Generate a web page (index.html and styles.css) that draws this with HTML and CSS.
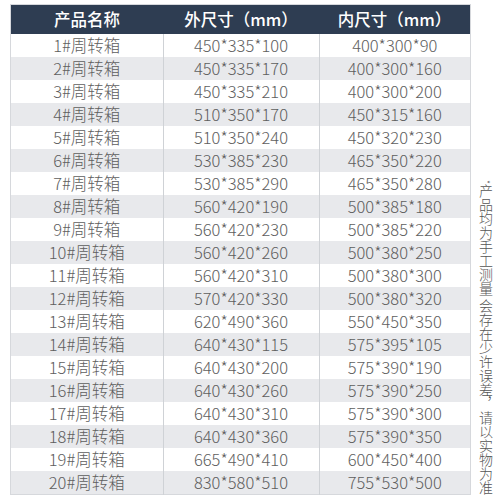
FILE: index.html
```html
<!DOCTYPE html>
<html lang="zh">
<head>
<meta charset="utf-8">
<link rel="stylesheet" href="styles.css">
</head>
<body>
<div class="page">
  <table class="spec">
    <thead>
      <tr><th class="c1">产品名称</th><th class="c2">外尺寸（mm）</th><th class="c3">内尺寸（mm）</th></tr>
    </thead>
    <tbody>
      <tr><td>1#周转箱</td><td>450*335*100</td><td>400*300*90</td></tr>
      <tr><td>2#周转箱</td><td>450*335*170</td><td>400*300*160</td></tr>
      <tr><td>3#周转箱</td><td>450*335*210</td><td>400*300*200</td></tr>
      <tr><td>4#周转箱</td><td>510*350*170</td><td>450*315*160</td></tr>
      <tr><td>5#周转箱</td><td>510*350*240</td><td>450*320*230</td></tr>
      <tr><td>6#周转箱</td><td>530*385*230</td><td>465*350*220</td></tr>
      <tr><td>7#周转箱</td><td>530*385*290</td><td>465*350*280</td></tr>
      <tr><td>8#周转箱</td><td>560*420*190</td><td>500*385*180</td></tr>
      <tr><td>9#周转箱</td><td>560*420*230</td><td>500*385*220</td></tr>
      <tr><td>10#周转箱</td><td>560*420*260</td><td>500*380*250</td></tr>
      <tr><td>11#周转箱</td><td>560*420*310</td><td>500*380*300</td></tr>
      <tr><td>12#周转箱</td><td>570*420*330</td><td>500*380*320</td></tr>
      <tr><td>13#周转箱</td><td>620*490*360</td><td>550*450*350</td></tr>
      <tr><td>14#周转箱</td><td>640*430*115</td><td>575*395*105</td></tr>
      <tr><td>15#周转箱</td><td>640*430*200</td><td>575*390*190</td></tr>
      <tr><td>16#周转箱</td><td>640*430*260</td><td>575*390*250</td></tr>
      <tr><td>17#周转箱</td><td>640*430*310</td><td>575*390*300</td></tr>
      <tr><td>18#周转箱</td><td>640*430*360</td><td>575*390*350</td></tr>
      <tr><td>19#周转箱</td><td>665*490*410</td><td>600*450*400</td></tr>
      <tr><td>20#周转箱</td><td>830*580*510</td><td>755*530*500</td></tr>
    </tbody>
  </table>
  <div class="note"><span class="star">*</span>产品均为手工测量 会存在少许误差，请以实物为准</div>
</div>
</body>
</html>
```
FILE: styles.css
```css
html, body {
  margin: 0;
  padding: 0;
  background: #ffffff;
}
.page {
  display: flex;
  align-items: flex-end;
  width: 500px;
  height: 495px;
  padding: 3px 0 0 10px;
  box-sizing: border-box;
}
.spec {
  flex: none;
  width: 459px;
  border-collapse: collapse;
  table-layout: fixed;
  font-family: "Noto Sans CJK SC", "Noto Sans", sans-serif;
  border: 1px solid #d6d8dc;
}
.spec th {
  background: #2e3d52;
  color: #ffffff;
  font-size: 16.5px;
  font-weight: 500;
  height: 29px;
  padding: 0;
  line-height: 29px;
  text-align: center;
}
.spec .c1 { width: 152px; }
.spec .c2 { width: 156px; }
.spec .c3 { width: 151px; }
.spec td {
  height: 23px;
  padding: 0;
  line-height: 23px;
  text-align: center;
  color: #5e5e5e;
  font-size: 16.5px;
  font-weight: 300;
  border-left: 1px solid #cfd2d6;
}
.spec td:first-child { border-left: none; }
.spec tbody tr:nth-child(even) td { background: #e8e9ec; }
.note {
  flex: none;
  width: 28px;
  margin-left: 1px;
  writing-mode: vertical-rl;
  font-family: "Noto Sans CJK SC", sans-serif;
  font-size: 14px;
  line-height: 28px;
  color: #555555;
  font-weight: 300;
}
.star {
  font-size: 9px;
}
```
